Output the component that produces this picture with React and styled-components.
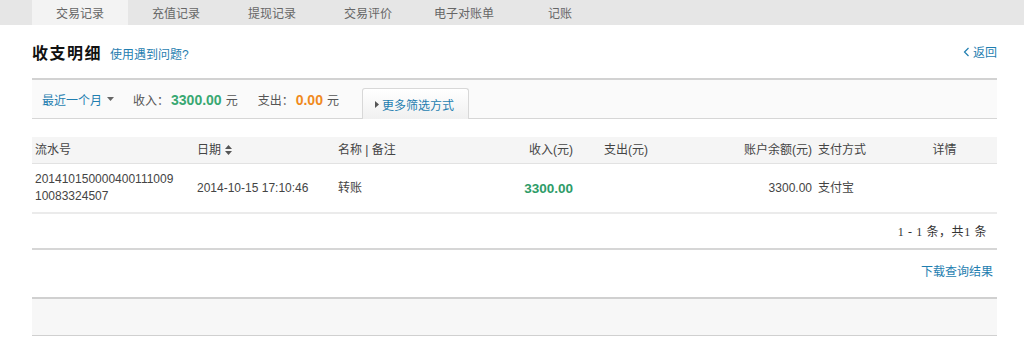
import styled, { createGlobalStyle } from "styled-components"

const GlobalStyle = createGlobalStyle`
  body {
    margin: 0;
    background: #fff;
    font-family: "Liberation Sans", "Noto Sans CJK SC", sans-serif;
    font-size: 12px;
    color: #333;
  }
`

const Nav = styled.ul`
  display: flex;
  margin: 0;
  padding: 0 0 0 32px;
  list-style: none;
  height: 25px;
  background: #e6e6e6;
`

const NavTab = styled.li`
  width: 96px;
  display: grid;
  place-items: center;
  color: #666;
  background: ${(p) => (p.$active ? "#f3f3f3" : "transparent")};
`

const Main = styled.div`
  padding: 0 27px 0 32px;
`

const TitleRow = styled.div`
  height: 53px;
  display: flex;
  align-items: center;
  justify-content: space-between;
`

const TitleGroup = styled.div`
  display: flex;
  align-items: baseline;
  gap: 8px;
`

const Title = styled.h2`
  margin: 0;
  font-size: 16px;
  letter-spacing: 1.5px;
  color: #111;
`

const Link = styled.a`
  color: #1f7eb0;
  font-size: 12px;
  text-decoration: none;
  cursor: pointer;
`

const BackLink = styled(Link)`
  display: flex;
  align-items: center;
  gap: 3px;
`

const FilterBar = styled.div`
  height: 38px;
  border-top: 2px solid #d2d2d2;
  border-bottom: 1px solid #d6d6d6;
  background: #fafafa;
  display: flex;
  align-items: flex-end;
  padding-left: 10px;
`

const FilterItems = styled.div`
  height: 100%;
  display: flex;
  align-items: center;
`

const Period = styled(Link)`
  display: flex;
  align-items: center;
  gap: 5px;
  margin-right: 19px;
`

const Stat = styled.span`
  color: #555;
  margin-right: 20px;
  display: flex;
  align-items: baseline;
`

const Amount = styled.b`
  font-size: 14px;
  color: ${(p) => p.$color};
  margin: 0 4px 0 2px;
`

const MoreButton = styled.button`
  align-self: flex-end;
  height: 31px;
  margin: 0 0 -1px 3px;
  width: 107px;
  border: 1px solid #d8d8d8;
  border-bottom: none;
  border-radius: 3px 3px 0 0;
  background: linear-gradient(#ffffff, #f0f0f0);
  font: inherit;
  color: #1f7eb0;
  display: flex;
  align-items: center;
  gap: 3px;
  padding: 0 0 0 12px;
`

const Table = styled.div`
  margin-top: 18px;
`

const Row = styled.div`
  display: grid;
  grid-template-columns: 163px 140px 145px 98px 122px 115px 87px 1fr;
  align-items: center;
  height: ${(p) => p.$h}px;
  background: ${(p) => p.$bg || "#fff"};
  border-bottom: ${(p) => p.$border};
`

const Cell = styled.div`
  padding: ${(p) => p.$pad || "0 0 0 3px"};
  color: ${(p) => p.$color || "#444"};
  font-weight: ${(p) => (p.$bold ? "bold" : "normal")};
  font-size: ${(p) => (p.$bold ? "13.5px" : "12px")};
  line-height: 17px;
  display: flex;
  align-items: center;
  justify-content: ${(p) =>
    p.$align === "right" ? "flex-end" : p.$align === "center" ? "center" : "flex-start"};
  gap: 4px;
`

const Pager = styled.div`
  height: 34px;
  border-bottom: 2px solid #d6d6d6;
  display: flex;
  align-items: center;
  justify-content: flex-end;
  padding-right: 10px;
  font-family: "Liberation Serif", "Noto Sans CJK SC", serif;
  letter-spacing: 0.6px;
  color: #333;
`

const DownloadRow = styled.div`
  height: 47px;
  display: flex;
  justify-content: flex-end;
  padding: 12px 4px 0 0;
  box-sizing: border-box;
`

const Footer = styled.div`
  height: 36px;
  border-top: 2px solid #d0d0d0;
  border-bottom: 1px solid #d0d0d0;
  background: #f7f7f7;
`

const SortIcon = () => (
  <svg width="7" height="10" viewBox="0 0 7 10">
    <path d="M3.5 0 L7 4 L0 4 Z M0 6 L7 6 L3.5 10 Z" fill="#555" />
  </svg>
)

const headers = [
  { label: "流水号", pad: "0 0 0 3px" },
  { label: "日期", pad: "0 0 0 2px", sort: true },
  { label: "名称 | 备注", pad: "0 0 0 3px" },
  { label: "收入(元)", align: "right", pad: "0 5px 0 0" },
  { label: "支出(元)", pad: "0 0 0 26px" },
  { label: "账户余额(元)", align: "right", pad: "0 3px 0 0" },
  { label: "支付方式", pad: "0 0 0 3px" },
  { label: "详情", align: "center", pad: "0 10px 0 0" },
]

const App = () => {
  return (
    <>
      <GlobalStyle />
      <Nav>
        {["交易记录", "充值记录", "提现记录", "交易评价", "电子对账单", "记账"].map((t, i) => (
          <NavTab key={t} $active={i === 0}>{t}</NavTab>
        ))}
      </Nav>
      <Main>
        <TitleRow>
          <TitleGroup>
            <Title>收支明细</Title>
            <Link>使用遇到问题?</Link>
          </TitleGroup>
          <BackLink>
            <svg width="7" height="10" viewBox="0 0 7 10">
              <path d="M5.5 1 L1.5 5 L5.5 9" stroke="#1f7eb0" strokeWidth="1.2" fill="none" />
            </svg>
            返回
          </BackLink>
        </TitleRow>
        <FilterBar>
          <FilterItems>
            <Period>
              最近一个月
              <svg width="7" height="4" viewBox="0 0 7 4">
                <path d="M0 0 L7 0 L3.5 4 Z" fill="#666" />
              </svg>
            </Period>
            <Stat>收入：<Amount $color="#38a872">3300.00</Amount>元</Stat>
            <Stat>支出：<Amount $color="#f08a1d">0.00</Amount>元</Stat>
          </FilterItems>
          <MoreButton>
            <svg width="4" height="7" viewBox="0 0 4 7">
              <path d="M0 0 L4 3.5 L0 7 Z" fill="#555" />
            </svg>
            更多筛选方式
          </MoreButton>
        </FilterBar>
        <Table>
          <Row $h={26} $bg="#f5f5f5" $border="1px solid #e2e2e2">
            {headers.map((h) => (
              <Cell key={h.label} $align={h.align} $pad={h.pad} $color="#444">
                {h.label}
                {h.sort && <SortIcon />}
              </Cell>
            ))}
          </Row>
          <Row $h={48} $border="2px solid #ebebeb">
            <Cell $pad="0 0 0 3px">201410150000400111009<br />10083324507</Cell>
            <Cell $pad="0 0 0 2px">2014-10-15 17:10:46</Cell>
            <Cell $pad="0 0 0 3px">转账</Cell>
            <Cell $align="right" $pad="0 5px 0 0" $color="#2e9c68" $bold>3300.00</Cell>
            <Cell $pad="0 0 0 26px"></Cell>
            <Cell $align="right" $pad="0 3px 0 0">3300.00</Cell>
            <Cell $pad="0 0 0 3px">支付宝</Cell>
            <Cell $align="center"></Cell>
          </Row>
          <Pager>1 - 1 条，共1 条</Pager>
        </Table>
        <DownloadRow>
          <Link>下载查询结果</Link>
        </DownloadRow>
        <Footer />
      </Main>
    </>
  )
}

export default App
